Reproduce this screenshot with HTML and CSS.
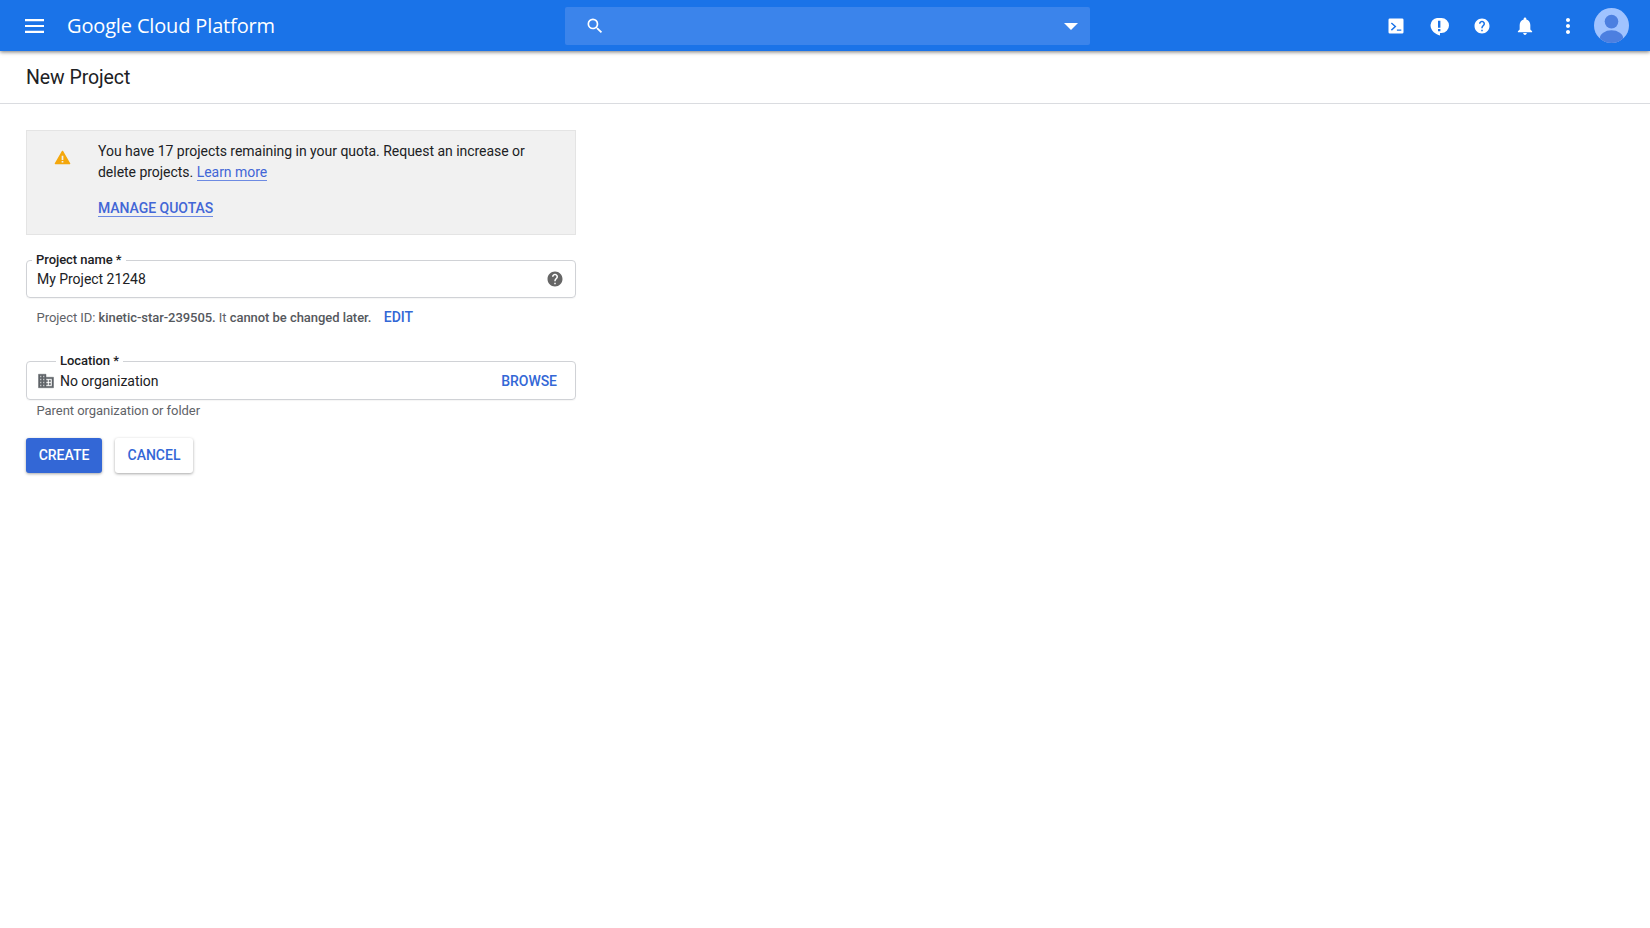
FILE: index.html
```html
<!DOCTYPE html>
<html lang="en">
<head>
<meta charset="utf-8">
<title>New Project</title>
<link rel="stylesheet" href="styles.css">
</head>
<body>
<header class="topbar">
  <svg class="menu" viewBox="0 0 24 24" width="24" height="24"><path d="M3 5h19v2.200H3zM3 10.900h19v2.200H3zM3 16.800h19V19H3z"/></svg>
  <div class="brand">Google Cloud Platform</div>
  <div class="search">
    <svg viewBox="0 0 24 24" width="20" height="20"><path d="M15.500 14h-.79l-.28-.27A6.470 6.470 0 0 0 16 9.500 6.500 6.500 0 1 0 9.500 16c1.610 0 3.090-.59 4.230-1.570l.27.28v.79l5 4.990L20.490 19l-4.990-5zm-6 0C7.010 14 5 11.990 5 9.500S7.010 5 9.500 5 14 7.010 14 9.500 11.990 14 9.500 14z"/></svg>
    <span class="caret"></span>
  </div>
  <div class="actions">
    <svg viewBox="-1.600 -1.600 27.200 27.200" width="24" height="24"><path fill-rule="evenodd" d="M5 3.500h14A1.500 1.500 0 0 1 20.500 5v14a1.500 1.500 0 0 1-1.500 1.500H5A1.500 1.500 0 0 1 3.500 19V5A1.500 1.500 0 0 1 5 3.500zM6.200 9.300l3.900 3.400-3.900 3.400 1.100 1.200 5.200-4.600-5.200-4.600zM13 16h5v1.500h-5z"/></svg>
    <svg viewBox="0 0 24 24" width="24" height="24"><path fill-rule="evenodd" d="M10 4h4.500a7.500 7.500 0 0 1 0 15H13v2.500c-4-1-9.500-4.500-9.500-10.500A7 7.500 0 0 1 10 4zM11 6.800v7h2.400v-7zM11 15v2.200h2.400V15z"/></svg>
    <svg viewBox="-4 -4 32 32" width="24" height="24"><path d="M12 2C6.480 2 2 6.480 2 12s4.480 10 10 10 10-4.480 10-10S17.520 2 12 2zm1 17h-2v-2h2v2zm2.070-7.750l-.9.920C13.450 12.900 13 13.500 13 15h-2v-.5c0-1.100.450-2.100 1.170-2.830l1.240-1.260c.370-.360.590-.860.590-1.410 0-1.100-.9-2-2-2s-2 .9-2 2H8c0-2.210 1.790-4 4-4s4 1.790 4 4c0 .880-.360 1.680-.930 2.250z"/></svg>
    <svg viewBox="-1.500 -1.500 27 27" width="24" height="24"><path d="M12 22c1.100 0 2-.9 2-2h-4c0 1.100.9 2 2 2zm6-6v-5c0-3.070-1.630-5.640-4.500-6.320V4c0-.830-.670-1.500-1.500-1.500s-1.500.670-1.500 1.500v.680C7.640 5.360 6 7.920 6 11v5l-2 2v1h16v-1l-2-2z"/></svg>
    <svg viewBox="0 0 24 24" width="24" height="24"><path d="M12 8c1.100 0 2-.9 2-2s-.9-2-2-2-2 .9-2 2 .9 2 2 2zm0 2c-1.100 0-2 .9-2 2s.9 2 2 2 2-.9 2-2-.9-2-2-2zm0 6c-1.100 0-2 .9-2 2s.9 2 2 2 2-.9 2-2-.9-2-2-2z"/></svg>
  </div>
  <svg class="avatar" viewBox="0 0 36 36" width="35" height="35">
    <defs><clipPath id="avatar-clip"><circle cx="18" cy="18" r="18"/></clipPath></defs>
    <circle cx="18" cy="18" r="18" fill="#a0c3ff"/>
    <g clip-path="url(#avatar-clip)" fill="#4c7fe0">
      <circle cx="18" cy="14" r="7"/>
      <ellipse cx="18" cy="31" rx="12" ry="8"/>
    </g>
  </svg>
</header>

<div class="page-title"><h1>New Project</h1></div>

<main class="content">
  <section class="notice">
    <svg class="warn" viewBox="0 0 24 24" width="17" height="17"><path class="warn-body" d="M12 3.500 22 20.500H2z"/><path class="warn-mark" d="M10.800 9.500h2.400v6h-2.400zM10.800 17h2.400v2h-2.400z"/></svg>
    <div class="notice-body">
      <p>You have 17 projects remaining in your quota. Request an increase or delete projects. <a href="#" class="link">Learn more</a></p>
      <a href="#" class="link strong">MANAGE QUOTAS</a>
    </div>
  </section>

  <div class="field name-field">
    <label class="field-label">Project name *</label>
    <span class="value">My Project 21248</span>
    <svg class="help" viewBox="0 0 24 24" width="18" height="18"><path d="M12 2C6.480 2 2 6.480 2 12s4.480 10 10 10 10-4.480 10-10S17.520 2 12 2zm1 17h-2v-2h2v2zm2.070-7.750l-.9.920C13.450 12.900 13 13.500 13 15h-2v-.5c0-1.100.450-2.100 1.170-2.830l1.240-1.260c.370-.360.590-.860.590-1.410 0-1.100-.9-2-2-2s-2 .9-2 2H8c0-2.210 1.790-4 4-4s4 1.790 4 4c0 .880-.360 1.680-.930 2.250z"/></svg>
  </div>
  <div class="hint id-hint">Project ID: <span class="dark">kinetic-star-239505.</span> It <span class="dark">cannot be changed later.</span><a href="#" class="action edit">EDIT</a></div>

  <div class="field location-field">
    <label class="field-label">Location *</label>
    <svg class="org" viewBox="0 0 24 24" width="18" height="18"><path d="M12 7V3H2v18h20V7H12zM6 19H4v-2h2v2zm0-4H4v-2h2v2zm0-4H4V9h2v2zm0-4H4V5h2v2zm4 12H8v-2h2v2zm0-4H8v-2h2v2zm0-4H8V9h2v2zm0-4H8V5h2v2zm10 12h-8v-2h2v-2h-2v-2h2v-2h-2V9h8v10zm-2-8h-2v2h2v-2zm0 4h-2v2h2v-2z"/></svg>
    <span class="value">No organization</span>
    <a href="#" class="action browse">BROWSE</a>
  </div>
  <div class="hint parent-hint">Parent organization or folder</div>

  <div class="buttons">
    <button class="btn primary">CREATE</button>
    <button class="btn secondary">CANCEL</button>
  </div>
</main>
</body>
</html>
```
FILE: styles.css
```css
* { box-sizing: border-box; }
html, body { margin: 0; height: 100%; background: #fff; }
body { font-family: Roboto, "Liberation Sans", sans-serif; font-size: 14px; letter-spacing: -.03px; color: #202124; overflow: hidden; }

.topbar {
  height: 51px;
  background: #1a73e8;
  display: flex;
  align-items: center;
  box-shadow: 0 1px 4px rgba(0,0,0,.55);
  position: relative;
  color: #fff;
}
.topbar svg { fill: #fff; flex: none; }
.menu { margin-left: 22px; }
.brand { margin-left: 21px; width: 498px; font-family: "Open Sans", Roboto, sans-serif; font-size: 20px; letter-spacing: -.15px; }
.search {
  width: 525px;
  height: 38px;
  margin-top: 1px;
  background: #3b84eb;
  border-radius: 2px;
  display: flex;
  align-items: center;
  justify-content: space-between;
  padding: 0 12px 0 20px;
}
.caret { width: 0; height: 0; border-left: 7px solid transparent; border-right: 7px solid transparent; border-top: 7px solid #fff; }
.actions { margin-left: 294px; display: flex; gap: 19px; align-items: center; }
.avatar { margin-left: 14px; }

.page-title { height: 53px; border-bottom: 1px solid #dadce0; padding: 0 26px; display: flex; align-items: center; }
h1 { margin: 0; font-size: 19.500px; font-weight: 400; letter-spacing: -.08px; color: #202124; }

.content { width: 576px; padding: 26px 0 0 26px; }

.notice {
  height: 105px;
  background: #f1f1f1;
  border: 1px solid #e4e4e4;
  display: flex;
  padding: 10px 0 0 27px;
}
.warn { margin-top: 8px; flex: none; }
.warn-body { fill: #f4a70c; stroke: #f4a70c; stroke-width: 2; stroke-linejoin: round; }
.warn-mark { fill: #f1f1f1; }
.notice-body { margin-left: 27px; width: 440px; }
.notice p { margin: 0 0 17px; line-height: 21px; }
.link { color: #4266d6; text-decoration: none; border-bottom: 1px solid #6d8ae2; }
.strong { font-weight: 500; }

.field {
  position: relative;
  height: 38px;
  border: 1px solid #d0d2d6;
  border-radius: 4px;
  display: flex;
  align-items: center;
  box-shadow: 0 1px 1px rgba(0,0,0,.04);
}
.field-label {
  position: absolute;
  top: -9px;
  background: #fff;
  font-size: 13px;
  font-weight: 500;
  line-height: 15px;
  letter-spacing: -.05px;
  padding: 0 4px;
  color: #202124;
}
.value { color: #202124; }
.name-field { margin-top: 25px; padding: 0 11px 0 10px; justify-content: space-between; }
.name-field .field-label { left: 5px; }
.help { fill: #666; }

.hint { font-size: 13px; color: #5f6368; letter-spacing: -.05px; }
.dark { color: #55585d; font-weight: 500; }
.id-hint { margin-top: 10px; padding-left: 10.500px; line-height: 18px; }
.action { color: #3367d6; font-weight: 500; text-decoration: none; font-size: 14px; }
.edit { margin-left: 12.500px; }

.location-field { margin-top: 34px; height: 39px; padding: 0 18px 0 10px; }
.location-field .field-label { left: 29px; }
.org { fill: #5f6368; stroke: #5f6368; stroke-width: .6; margin-right: 5px; flex: none; }
.browse { margin-left: auto; }
.parent-hint { margin-top: 2px; padding-left: 10.500px; line-height: 18px; }

.buttons { margin-top: 18px; display: flex; gap: 13px; }
.btn {
  height: 35px;
  border: 0;
  border-radius: 3px;
  padding: 0 0 1px;
  font: 500 14px Roboto, sans-serif;
  cursor: pointer;
  box-shadow: 0 1px 3px rgba(0,0,0,.35);
}
.primary { width: 76px; background: #3367d6; color: #fff; }
.secondary { width: 78px; background: #fff; color: #3367d6; }
```
